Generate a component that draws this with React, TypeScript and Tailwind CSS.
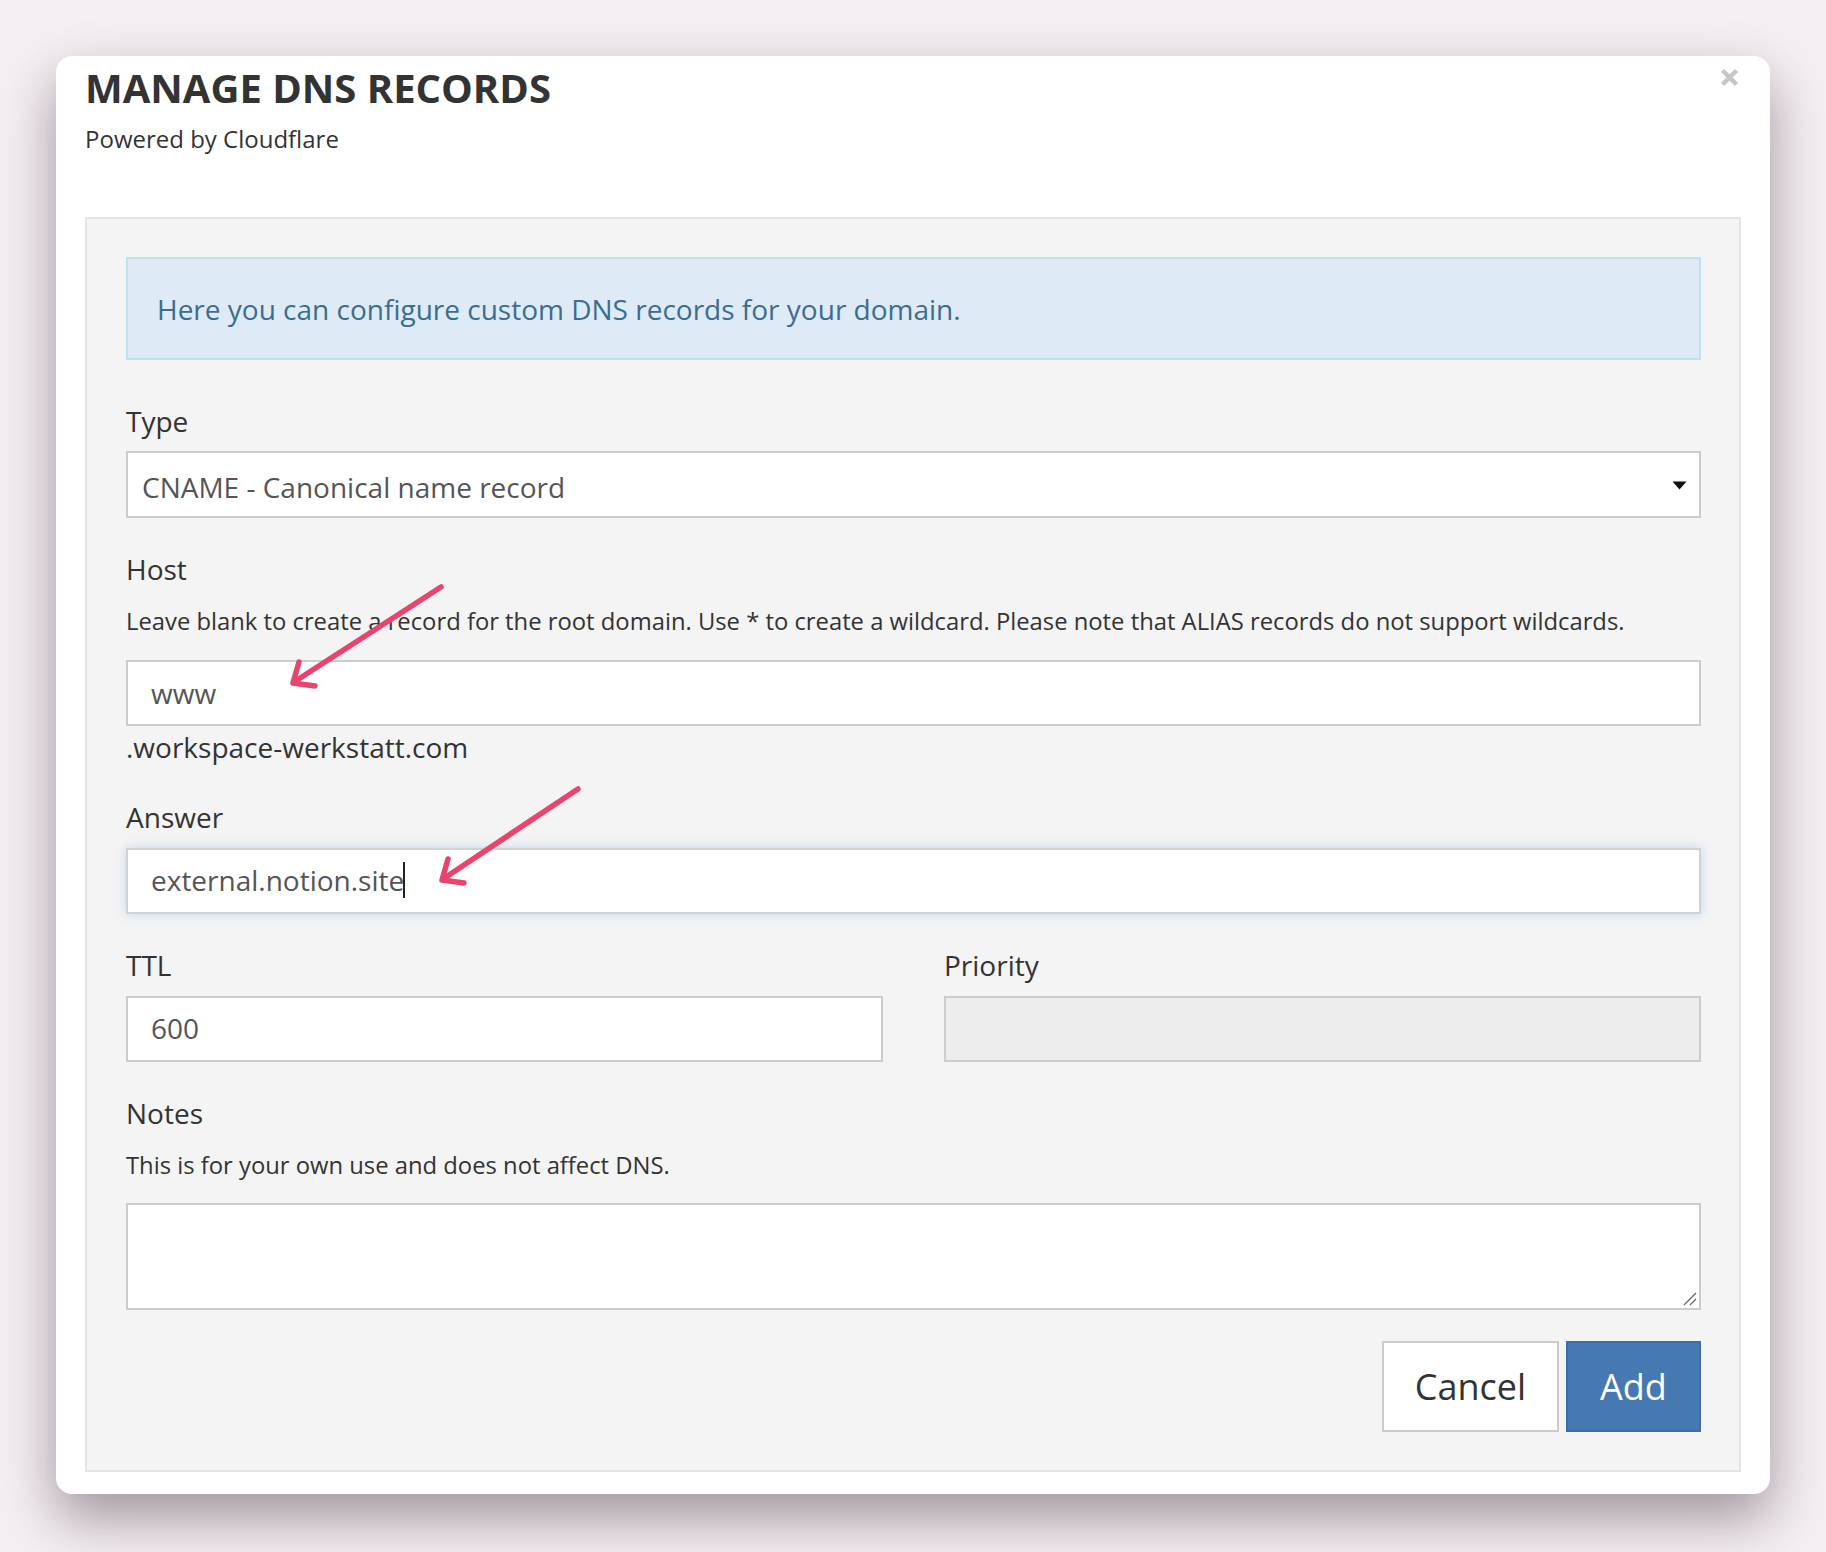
import React from "react";

const font = "font-['Open_Sans',sans-serif]";

function Label({ children, className = "" }: { children: React.ReactNode; className?: string }) {
  return <div className={`text-[28px] leading-[40px] text-[#333] ${className}`}>{children}</div>;
}

function Help({ children, className = "" }: { children: React.ReactNode; className?: string }) {
  return <div className={`text-[23.8px] leading-[34px] text-[#333] ${className}`}>{children}</div>;
}

export default function App() {
  return (
    <div className={`relative w-[1826px] h-[1552px] overflow-hidden bg-[#f5eff3] pt-[56px] pl-[56px] ${font}`}>
      <div className="relative w-[1714px] bg-white rounded-[16px] shadow-[0_24px_55px_rgba(40,25,35,0.42)] px-[29px] pt-[8px] pb-[22px]">
        {/* close */}
        <div className="absolute top-[12px] right-[31px] w-[19px] h-[19px]">
          <svg width="19" height="19" viewBox="0 0 19 19">
            <path d="M2.5 2.5 L16.5 16.5 M16.5 2.5 L2.5 16.5" stroke="#c6c6c6" strokeWidth="4.5" strokeLinecap="butt" />
          </svg>
        </div>

        <div className="text-[40px] leading-[48px] font-bold text-[#333]">MANAGE DNS RECORDS</div>
        <div className="mt-[10px] text-[24px] leading-[34px] text-[#333]">Powered by Cloudflare</div>

        <div className="mt-[61px] border-2 border-[#e4e4e4] bg-[#f4f4f4] pl-[39px] pr-[38px] pt-[38px] pb-[38px]">
          <div className="h-[103px] border-2 border-[#c0e2ef] bg-[#deebf6] flex items-center pl-[29px]">
            <span className="text-[28px] leading-[40px] text-[#3b6d90]">
              Here you can configure custom DNS records for your domain.
            </span>
          </div>

          <Label className="mt-[41px]">Type</Label>
          <div className="mt-[10px] h-[67px] border-2 border-[#cccccc] bg-white flex justify-between items-start pl-[14px] pr-[12px] pt-[14px]">
            <span className="text-[28px] leading-[40px] text-[#555]">CNAME - Canonical name record</span>
            <svg className="mt-[14px]" width="15" height="9" viewBox="0 0 15 9">
              <path d="M0.5 0.5 L14.5 0.5 L7.5 8.5 Z" fill="#111" />
            </svg>
          </div>

          <Label className="mt-[31px]">Host</Label>
          <Help className="mt-[15px]">
            Leave blank to create a record for the root domain. Use * to create a wildcard. Please note that ALIAS records do not support wildcards.
          </Help>
          <div className="mt-[22px] h-[66px] border-2 border-[#cccccc] bg-white pl-[23px] pt-[11px]">
            <span className="text-[28px] leading-[40px] text-[#555]">www</span>
          </div>
          <Label className="mt-[1px]">.workspace-werkstatt.com</Label>

          <Label className="mt-[30px]">Answer</Label>
          <div className="mt-[11px] h-[66px] border-2 border-[#cfd3d8] bg-white pl-[23px] pt-[10px] shadow-[0_0_10px_rgba(102,160,225,0.35)]">
            <span className="text-[28px] leading-[40px] text-[#555] inline-flex items-center">
              external.notion.site
              <span className="inline-block w-[2px] h-[36px] bg-[#222] -ml-[1px]" />
            </span>
          </div>

          <div className="mt-[31px] grid grid-cols-2 gap-x-[61px]">
            <div>
              <Label>TTL</Label>
              <div className="mt-[11px] h-[66px] border-2 border-[#cccccc] bg-white pl-[23px] pt-[10px]">
                <span className="text-[28px] leading-[40px] text-[#555]">600</span>
              </div>
            </div>
            <div>
              <Label>Priority</Label>
              <div className="mt-[11px] h-[66px] border-2 border-[#cccccc] bg-[#ededed]" />
            </div>
          </div>

          <Label className="mt-[31px]">Notes</Label>
          <Help className="mt-[15px]">This is for your own use and does not affect DNS.</Help>
          <div className="relative mt-[21px]">
            <textarea
              className="block w-full h-[107px] border-2 border-[#cccccc] bg-white outline-none resize-none"
              defaultValue=""
            />
            <svg className="absolute right-[4px] bottom-[4px] pointer-events-none" width="14" height="14" viewBox="0 0 14 14">
              <path d="M1 13 L13 1 M7 13 L13 7" stroke="#666" strokeWidth="1.3" />
            </svg>
          </div>

          <div className="mt-[31px] flex justify-end gap-[7px]">
            <div className="w-[177px] h-[91px] border-2 border-[#cccccc] bg-white flex items-center justify-center text-[36px] text-[#333]">
              Cancel
            </div>
            <div className="w-[135px] h-[91px] border-2 border-[#3f6ea7] bg-[#4678b1] flex items-center justify-center text-[36px] text-white">
              Add
            </div>
          </div>
        </div>
      </div>

      {/* annotation arrows */}
      <svg className="absolute left-0 top-0 pointer-events-none" width="1826" height="1552" viewBox="0 0 1826 1552">
        <g stroke="#e8446c" strokeWidth="5.5" strokeLinecap="round" strokeLinejoin="round" fill="none">
          <path d="M441 587 L294 682" />
          <path d="M299 662 L293 683 L315 686" />
          <path d="M578 789 L443 879" />
          <path d="M448 859 L442 880 L464 883" />
        </g>
      </svg>
    </div>
  );
}
